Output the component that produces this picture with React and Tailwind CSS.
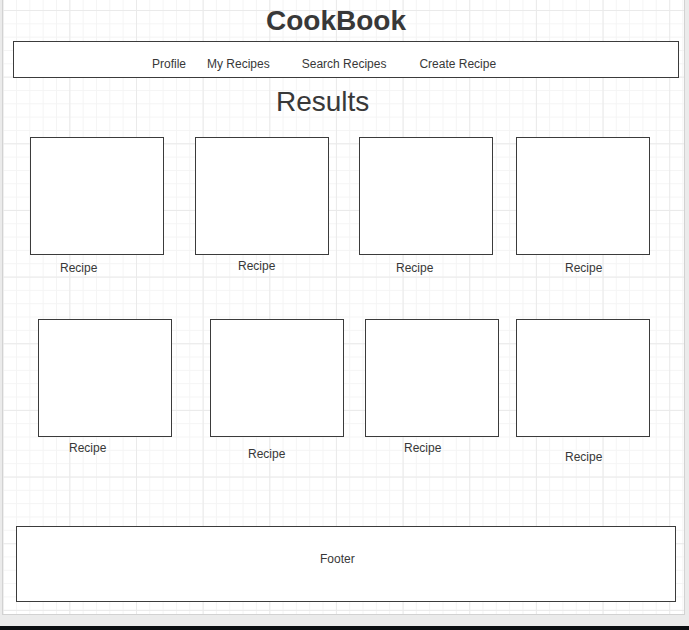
const NAV = [
  { label: 'Profile', ml: 'ml-[138px]' },
  { label: 'My Recipes', ml: 'ml-[21px]' },
  { label: 'Search Recipes', ml: 'ml-[32px]' },
  { label: 'Create Recipe', ml: 'ml-[33px]' },
]

// box offset from previous box, label offsets inside card
const ROW_ONE = [
  { ml: 'ml-[27px]', label: 'ml-[30px] mt-[6px]' },
  { ml: 'ml-[31px]', label: 'ml-[43px] mt-[4px]' },
  { ml: 'ml-[30px]', label: 'ml-[37px] mt-[6px]' },
  { ml: 'ml-[23px]', label: 'ml-[49px] mt-[6px]' },
]

const ROW_TWO = [
  { ml: 'ml-[35px]', label: 'ml-[31px] mt-[4px]' },
  { ml: 'ml-[38px]', label: 'ml-[38px] mt-[10px]' },
  { ml: 'ml-[21px]', label: 'ml-[39px] mt-[4px]' },
  { ml: 'ml-[17px]', label: 'ml-[49px] mt-[13px]' },
]

function RecipeCard({ ml, label }) {
  return (
    <div className={`flex flex-col ${ml}`}>
      <div className="w-[134px] h-[118px] border border-[#3b3b3b] bg-white" />
      <span className={`text-[12px] leading-[14px] ${label}`}>Recipe</span>
    </div>
  )
}

export default function App() {
  return (
    <div className="w-[689px] h-[630px] flex flex-col bg-[#ebebeb] text-[#383838] font-['Liberation_Sans',Arial,sans-serif]">
      {/* Page canvas */}
      <div className="ml-[2px] w-[683px] h-[615px] flex-shrink-0 flex flex-col border-x border-b border-[#d2d2d2] bg-white bg-[linear-gradient(to_right,#eaeaea_1px,transparent_1px),linear-gradient(to_bottom,#eaeaea_1px,transparent_1px),linear-gradient(to_right,#f4f4f4_1px,transparent_1px),linear-gradient(to_bottom,#f4f4f4_1px,transparent_1px)] [background-size:66.667px_66.667px,66.667px_66.667px,13.333px_13.333px,13.333px_13.333px] [background-position:-0.33px_10px,-0.33px_10px,-0.33px_10px,-0.33px_10px]">
        {/* Title */}
        <div className="pt-[5px] h-[37px]">
          <h1 className="ml-[263px] w-fit text-[28px] leading-[32px] font-bold">CookBook</h1>
        </div>

        {/* Nav bar */}
        <div className="ml-[10px] mt-[4px] w-[666px] h-[37px] flex items-start pt-[15px] border border-[#3b3b3b] bg-white text-[12px] leading-[14px]">
          {NAV.map(item => (
            <span key={item.label} className={item.ml}>{item.label}</span>
          ))}
        </div>

        {/* Results heading */}
        <h2 className="ml-[273px] mt-[8px] w-fit text-[28px] leading-[32px]">Results</h2>

        {/* Recipe grid */}
        <div className="mt-[19px] h-[182px] flex items-start">
          {ROW_ONE.map((c, i) => <RecipeCard key={i} {...c} />)}
        </div>
        <div className="h-[207px] flex items-start">
          {ROW_TWO.map((c, i) => <RecipeCard key={i} {...c} />)}
        </div>

        {/* Footer */}
        <div className="ml-[13px] w-[660px] h-[76px] border border-[#3b3b3b] bg-white pt-[25px] pl-[303px] text-[12px] leading-[14px]">
          Footer
        </div>
      </div>
      <div className="flex-1" />
      <div className="h-[4px] bg-[#0c0f13]" />
    </div>
  )
}
